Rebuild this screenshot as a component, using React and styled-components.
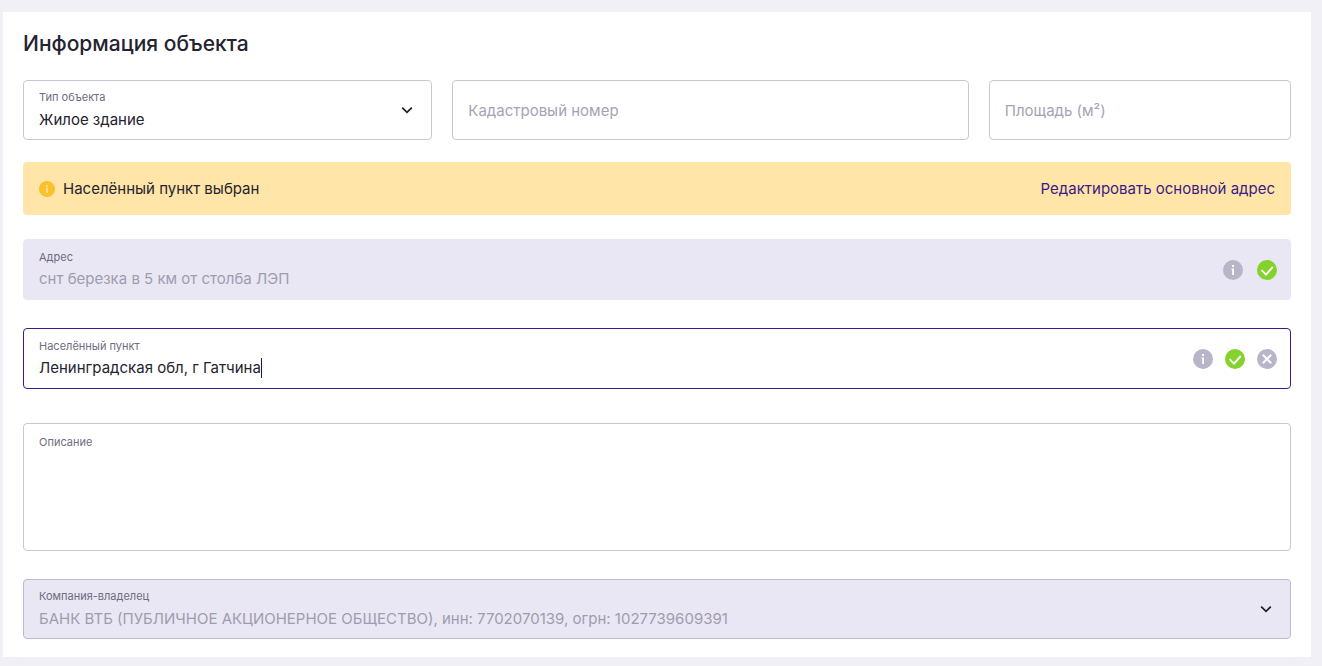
import { useState } from "react";
import styled, { createGlobalStyle } from "styled-components";

const GlobalStyle = createGlobalStyle`
  * {
    box-sizing: border-box;
  }

  body {
    margin: 0;
    background-color: #f1f0f7;
    color: #25232f;
    font-family: Inter, "Noto Sans", sans-serif;
    font-size: 15px;
  }
`;

const Page = styled.main`
  padding: 12px 11px 9px 3px;
`;

const Card = styled.section`
  background-color: #ffffff;
  padding: 18px 20px;
`;

const Title = styled.h1`
  margin: 0 0 22px;
  font-size: 21px;
  line-height: 28px;
  font-weight: 500;
`;

const Row = styled.div`
  display: grid;
  grid-template-columns: 409fr 516fr 302fr;
  gap: 20px;

  @media (max-width: 768px) {
    grid-template-columns: 1fr;
  }
`;

const Field = styled.div`
  display: flex;
  align-items: ${(props) => (props.$top ? "flex-start" : "center")};
  height: ${(props) => props.$height || 60}px;
  margin-top: ${(props) => props.$gap || 0}px;
  padding: 0 13px 0 15px;
  border: 1px solid ${(props) => props.$border || "#c9c8d0"};
  border-radius: 4px;
  background-color: ${(props) => (props.$disabled ? "#e9e7f3" : "#ffffff")};
`;

const Column = styled.div`
  flex: 1;
  min-width: 0;
  display: flex;
  flex-direction: column;
  gap: 2px;
  padding-top: ${(props) => (props.$top ? 10 : 0)}px;
`;

const Label = styled.label`
  font-size: 11px;
  line-height: 16px;
  color: #6f6c80;
`;

const Input = styled.input`
  width: 100%;
  height: 24px;
  padding: 0;
  border: none;
  outline: none;
  background: transparent;
  color: #25232f;
  font: inherit;

  &::placeholder {
    color: #a5a3b3;
    opacity: 1;
  }

  &:disabled {
    color: #9f9cb0;
  }
`;

const TypedLine = styled.div`
  display: flex;
  align-items: center;
`;

const TypedInput = styled(Input)`
  width: auto;
  max-width: 100%;
  field-sizing: content;
  caret-color: transparent;
`;

const Caret = styled.span`
  width: 1px;
  height: 20px;
  background-color: #1f1d2b;
`;

const Select = styled.select`
  appearance: none;
  width: 100%;
  height: 24px;
  padding: 0;
  border: none;
  outline: none;
  background: transparent;
  color: #25232f;
  font: inherit;

  &:disabled {
    color: #9f9cb0;
    opacity: 1;
  }
`;

const Textarea = styled.textarea`
  width: 100%;
  height: 92px;
  padding: 0;
  border: none;
  outline: none;
  resize: none;
  background: transparent;
  font: inherit;
`;

const Alert = styled.div`
  display: flex;
  align-items: center;
  gap: 8px;
  min-height: 53px;
  margin: 22px 0 24px;
  padding: 0 16px;
  border-radius: 4px;
  background-color: #ffe6a8;
`;

const AlertText = styled.p`
  flex: 1;
  margin: 0;
`;

const AlertLink = styled.a`
  color: #3d1a87;
  text-decoration: none;
`;

const Icons = styled.div`
  display: flex;
  align-items: center;
  gap: ${(props) => props.$gap}px;
`;

const IconButton = styled.button`
  display: flex;
  padding: 0;
  border: none;
  background: none;
  cursor: pointer;
`;

const Icon = styled.svg`
  display: block;
  flex: none;
`;

const InfoIcon = ({ size = 20, color = "#b8b5c9", mark = "#ffffff" }) => (
  <Icon width={size} height={size} viewBox="0 0 20 20" aria-hidden="true">
    <circle cx="10" cy="10" r="10" fill={color} />
    <rect x="9" y="5" width="2" height="2" fill={mark} />
    <path d="M8.4 8.4H11v6.6H9.2V9.6h-.8z" fill={mark} />
  </Icon>
);

const CheckIcon = () => (
  <Icon width="20" height="20" viewBox="0 0 20 20" aria-hidden="true">
    <circle cx="10" cy="10" r="10" fill="#84d22b" />
    <path d="M4.6 10.2l4.4 4.4 6.8-7.6" fill="none" stroke="#ffffff" strokeWidth="1.9" />
  </Icon>
);

const CloseIcon = () => (
  <Icon width="20" height="20" viewBox="0 0 20 20" aria-hidden="true">
    <circle cx="10" cy="10" r="10" fill="#b8b5c9" />
    <path d="M5.8 5.8l8.4 8.4M14.2 5.8l-8.4 8.4" stroke="#ffffff" strokeWidth="2" />
  </Icon>
);

const Chevron = () => (
  <Icon width="22" height="22" viewBox="0 0 22 22" aria-hidden="true">
    <path d="M6.2 8.6l4.8 4.8 4.8-4.8" fill="none" stroke="#1f1d2b" strokeWidth="1.7" />
  </Icon>
);

const App = () => {
  const [town, setTown] = useState("Ленинградская обл, г Гатчина");

  return (
    <Page>
      <GlobalStyle />
      <Card>
        <Title>Информация объекта</Title>
        <Row>
          <Field>
            <Column>
              <Label htmlFor="type">Тип объекта</Label>
              <Select id="type">
                <option>Жилое здание</option>
              </Select>
            </Column>
            <Chevron />
          </Field>
          <Field>
            <Input aria-label="Кадастровый номер" placeholder="Кадастровый номер" />
          </Field>
          <Field>
            <Input aria-label="Площадь (м²)" placeholder="Площадь (м²)" />
          </Field>
        </Row>

        <Alert>
          <InfoIcon size={16} color="#fbc02d" mark="#ffe6a8" />
          <AlertText>Населённый пункт выбран</AlertText>
          <AlertLink href="#address">Редактировать основной адрес</AlertLink>
        </Alert>

        <Field $height={61} $border="#e9e7f3" $disabled>
          <Column>
            <Label htmlFor="address">Адрес</Label>
            <Input id="address" defaultValue="снт березка в 5 км от столба ЛЭП" disabled />
          </Column>
          <Icons $gap={14}>
            <InfoIcon />
            <CheckIcon />
          </Icons>
        </Field>

        <Field $height={61} $gap={28} $border="#3d1a87">
          <Column>
            <Label htmlFor="town">Населённый пункт</Label>
            <TypedLine>
              <TypedInput id="town" value={town} onChange={(e) => setTown(e.target.value)} />
              <Caret />
            </TypedLine>
          </Column>
          <Icons $gap={12}>
            <InfoIcon />
            <CheckIcon />
            <IconButton type="button" aria-label="Очистить" onClick={() => setTown("")}>
              <CloseIcon />
            </IconButton>
          </Icons>
        </Field>

        <Field $height={128} $gap={34} $top>
          <Column $top>
            <Label htmlFor="description">Описание</Label>
            <Textarea id="description" />
          </Column>
        </Field>

        <Field $gap={28} $border="#bdbacd" $disabled>
          <Column>
            <Label htmlFor="owner">Компания-владелец</Label>
            <Select id="owner" disabled>
              <option>
                БАНК ВТБ (ПУБЛИЧНОЕ АКЦИОНЕРНОЕ ОБЩЕСТВО), инн: 7702070139, огрн: 1027739609391
              </option>
            </Select>
          </Column>
          <Chevron />
        </Field>
      </Card>
    </Page>
  );
};

export default App;
